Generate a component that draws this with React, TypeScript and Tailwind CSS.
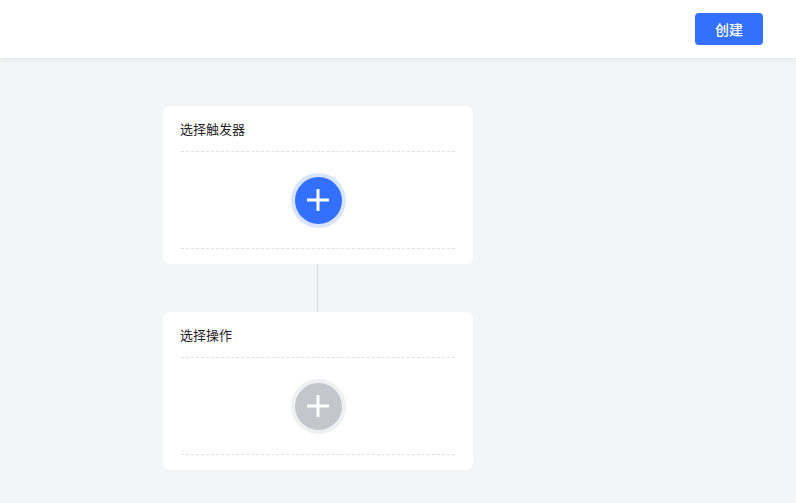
import React from "react";

function PlusCircle({ active }: { active?: boolean }) {
  return (
    <div
      className={
        "flex h-[47px] w-[47px] items-center justify-center rounded-full ring-4 " +
        (active ? "bg-[#3370ff] ring-[#d9e4fe]" : "bg-[#c4c6cc] ring-[#eff0f2]")
      }
    >
      <svg width="22" height="22" viewBox="0 0 22 22" fill="none">
        <path d="M11 1v20M1 11h20" stroke="white" strokeWidth="3" strokeLinecap="round" />
      </svg>
    </div>
  );
}

function StepCard({ title, active }: { title: string; active?: boolean }) {
  return (
    <div className="w-[310px] rounded-lg bg-white px-[18px] pb-[15px] pt-3">
      <div className="-ml-px mb-[11px] h-[22px] text-[13px] leading-[22px] text-[#1f2329]">{title}</div>
      <div className="flex h-[98px] items-center justify-center border-y border-dashed border-[#dee0e3]">
        <PlusCircle active={active} />
      </div>
    </div>
  );
}

export default function App() {
  return (
    <div
      className="min-h-[503px] bg-[#f4f5f7]"
      style={{ fontFamily: '"Noto Sans CJK SC", "Noto Sans", sans-serif' }}
    >
      <header className="flex h-[58px] items-center justify-end bg-white pr-[33px] shadow-[0_2px_6px_rgba(0,0,0,0.06)]">
        <button className="h-8 w-[68px] rounded bg-[#3370ff] text-sm font-medium text-white">创建</button>
      </header>

      <div className="flex flex-col items-start pl-[163px] pt-12">
        <StepCard title="选择触发器" active />
        <div className="ml-[154px] h-12 w-px bg-[#d6d8db]" />
        <StepCard title="选择操作" />
      </div>
    </div>
  );
}
